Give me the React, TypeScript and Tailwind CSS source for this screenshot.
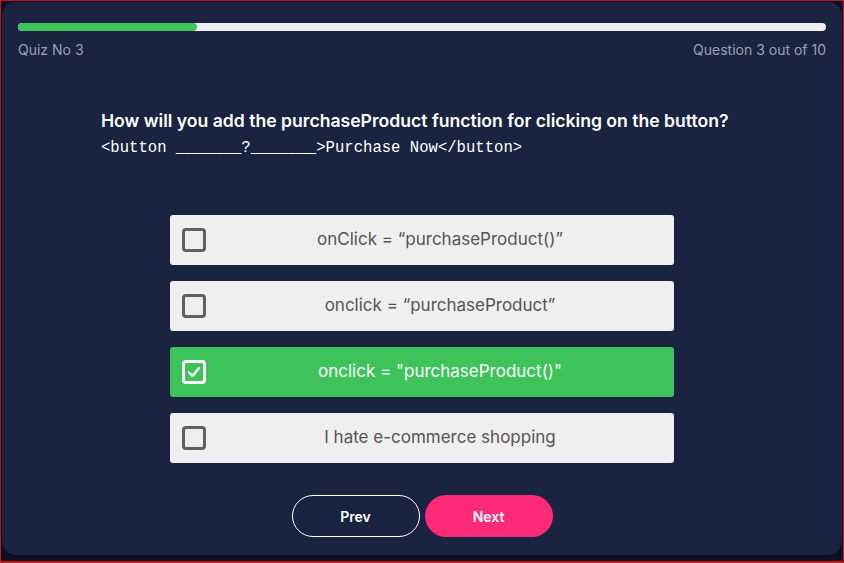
import React from "react";

const font = { fontFamily: "Inter, 'Noto Sans', sans-serif" };

function Box({ checked }: { checked?: boolean }) {
  if (checked) {
    return (
      <div className="w-[24px] h-[24px] rounded-[4px] border-[3px] border-white flex items-center justify-center shrink-0">
        <svg width="14" height="14" viewBox="0 0 14 14">
          <path d="M2 7.5 L5.5 11 L12 3" fill="none" stroke="white" strokeWidth="2.4" strokeLinecap="round" strokeLinejoin="round" />
        </svg>
      </div>
    );
  }
  return <div className="w-[24px] h-[24px] rounded-[4px] border-[3px] border-[#606060] shrink-0" />;
}

const options = [
  { t: "onClick = “purchaseProduct()”", c: false },
  { t: "onclick = “purchaseProduct”", c: false },
  { t: 'onclick = "purchaseProduct()"', c: true },
  { t: "I hate e-commerce shopping", c: false },
];

export default function App() {
  return (
    <div className="w-[844px] h-[563px] bg-[#c4141c] pt-[1px] px-[1px] pb-[2px]" style={font}>
      <div className="w-full h-full bg-[#0b0f26] pt-[1px] px-[1px] pb-[6px]">
        <div className="w-full h-full bg-[#1a2340] rounded-[14px] pt-[21px] px-[16px] flex flex-col">
          <div className="h-[8px] w-full bg-[#eef0f3] rounded-full overflow-hidden">
            <div className="h-full w-[179px] bg-[#3dc35a] rounded-full" />
          </div>
          <div className="flex justify-between mt-[10px] text-[14px] text-[#9aa1b3] leading-[18px]">
            <span>Quiz No 3</span>
            <span>Question 3 out of 10</span>
          </div>
          <div className="ml-[83px] mt-[51px]">
            <div className="text-white text-[17.6px] font-semibold leading-[22px]">
              How will you add the purchaseProduct function for clicking on the button?
            </div>
            <div className="text-white text-[15.6px] leading-[20px] mt-[6px]" style={{ fontFamily: "'Liberation Mono', monospace" }}>
              {"<button _______?_______>Purchase Now</button>"}
            </div>
          </div>
          <div className="flex flex-col gap-[16px] w-[504px] ml-[152px] mt-[57px]">
            {options.map((o, i) => (
              <div
                key={i}
                className={`h-[50px] rounded-[3px] flex items-center pl-[12px] ${o.c ? "bg-[#3dc35a] text-white" : "bg-[#efefef] text-[#555555]"}`}
              >
                <Box checked={o.c} />
                <div className="flex-1 text-center text-[17px]">{o.t}</div>
              </div>
            ))}
          </div>
          <div className="flex justify-center gap-[5px] mt-[32px]">
            <button className="w-[128px] h-[42px] rounded-full border border-white text-white text-[14px] font-semibold">Prev</button>
            <button className="w-[128px] h-[42px] rounded-full bg-[#fe2a78] text-white text-[14px] font-semibold">Next</button>
          </div>
        </div>
      </div>
    </div>
  );
}
